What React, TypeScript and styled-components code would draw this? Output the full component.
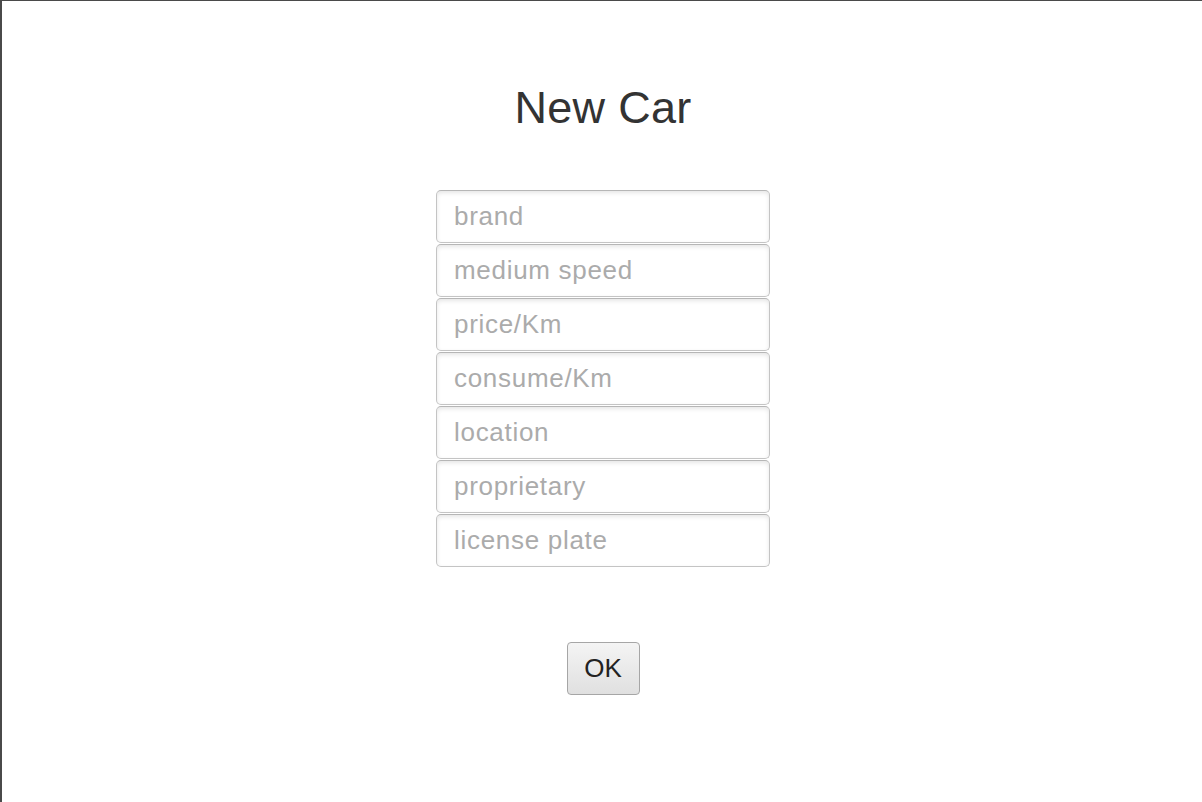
import React from "react";
import styled, { createGlobalStyle } from "styled-components";

const Global = createGlobalStyle`
  html, body { margin: 0; padding: 0; background: #fff; }
  * { box-sizing: border-box; }
`;

const Frame = styled.div`
  width: 1202px;
  height: 802px;
  border-top: 1px solid #4a4a4a;
  border-left: 2px solid #4a4a4a;
  background: #fff;
  display: flex;
  flex-direction: column;
  align-items: center;
  padding-top: 81px;
  font-family: "Liberation Sans", Arial, sans-serif;
`;

const Title = styled.h1`
  margin: 0 0 56px;
  height: 52px;
  line-height: 52px;
  font-size: 45px;
  font-weight: 400;
  color: #333;
  letter-spacing: 0.3px;
  transform: translateX(1px);
`;

const Fields = styled.div`
  display: flex;
  flex-direction: column;
  gap: 1px;
  width: 334px;
  transform: translateX(1px);
`;

const Field = styled.input`
  width: 100%;
  height: 53px;
  border: 1px solid #c4c4c4;
  border-top-color: #b6b6b6;
  border-radius: 5px;
  padding: 0 0 0 17px;
  font-family: "Liberation Sans", Arial, sans-serif;
  font-size: 26px;
  letter-spacing: 0.7px;
  color: #333;
  background: #fff;
  box-shadow: inset 0 2px 4px rgba(0, 0, 0, 0.1);
  outline: none;
  &::placeholder { color: #ababab; }
`;

const OkButton = styled.button`
  margin-top: 75px;
  width: 73px;
  height: 53px;
  border: 1px solid #a6a6a6;
  border-radius: 4px;
  background: linear-gradient(#f4f4f4, #e0e0e0);
  font-family: "Liberation Sans", Arial, sans-serif;
  font-size: 26px;
  color: #222;
  padding: 0;
  transform: translateX(1px);
`;

const fields = [
  "brand",
  "medium speed",
  "price/Km",
  "consume/Km",
  "location",
  "proprietary",
  "license plate",
];

export default function App() {
  return (
    <>
      <Global />
      <Frame>
        <Title>New Car</Title>
        <Fields>
          {fields.map((f) => (
            <Field key={f} placeholder={f} />
          ))}
        </Fields>
        <OkButton>OK</OkButton>
      </Frame>
    </>
  );
}
